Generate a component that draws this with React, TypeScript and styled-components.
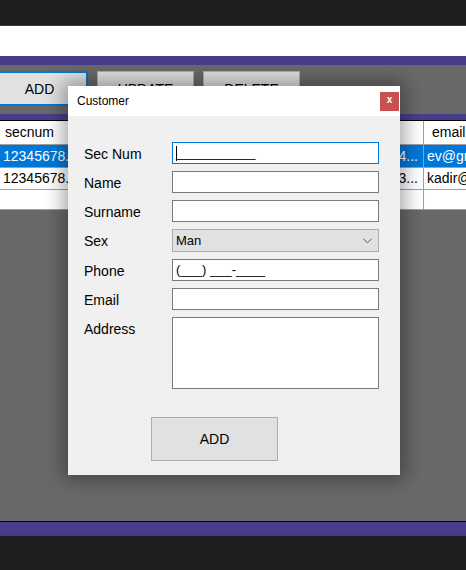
import React from "react";
import styled, { createGlobalStyle } from "styled-components";

const Global = createGlobalStyle`
  html, body { margin: 0; padding: 0; background: #1e1e1e; }
  body { font-family: "Liberation Sans", Arial, sans-serif; }
  * { box-sizing: border-box; }
`;

const Screen = styled.div`
  position: relative;
  width: 466px;
  height: 570px;
  overflow: hidden;
  display: flex;
  flex-direction: column;
  background: #1e1e1e;
`;

const TopBar = styled.div`
  height: 26px;
  flex: none;
  background: #1e1e1e;
  border-bottom: 1px solid #3a3a3a;
`;

const WhiteStrip = styled.div`
  height: 30px;
  flex: none;
  background: #ffffff;
`;

const PurpleStrip = styled.div<{ $h: number; $top?: string; $bottom?: string }>`
  height: ${(p) => p.$h}px;
  flex: none;
  background: #483d8b;
  border-top: ${(p) => p.$top ?? "none"};
  border-bottom: ${(p) => p.$bottom ?? "none"};
`;

const Toolbar = styled.div`
  height: 49px;
  flex: none;
  background: #696969;
  display: flex;
  gap: 9px;
  padding: 6px 0 0 0;
  margin-left: -9px;
`;

const ToolButton = styled.div<{ $active?: boolean }>`
  width: 97px;
  height: 35px;
  background: #e1e1e1;
  border: ${(p) => (p.$active ? "2px solid #0078d7" : "1px solid #adadad")};
  display: flex;
  align-items: center;
  justify-content: center;
  font-size: 14px;
  color: #000;
`;

const Grid = styled.div`
  flex: none;
  background: #fff;
  display: grid;
  grid-template-columns: 83px 100px 100px 58px 83px 100px;
  width: 524px;
`;

const Cell = styled.div<{ $sel?: boolean; $h: number }>`
  height: ${(p) => p.$h}px;
  line-height: ${(p) => p.$h - 1}px;
  padding: 0 3px;
  font-size: 14px;
  color: ${(p) => (p.$sel ? "#fff" : "#000")};
  background: ${(p) => (p.$sel ? "#0078d7" : "#fff")};
  border-right: 1px solid #a0a0a0;
  border-bottom: 1px solid #a0a0a0;
  white-space: nowrap;
  overflow: hidden;
`;

const HeadCell = styled(Cell)<{ $pad: number }>`
  padding: 0 ${(p) => p.$pad}px;
`;

const Filler = styled.div`
  flex: 1;
  background: #696969;
`;

const Dark = styled.div`
  height: 35px;
  flex: none;
  background: #1e1e1e;
  border-top: 1px solid #444;
`;

const Dialog = styled.div`
  position: absolute;
  left: 68px;
  top: 86px;
  width: 332px;
  height: 389px;
  background: #f0f0f0;
  box-shadow: 0 0 18px 5px rgba(0, 0, 0, 0.35);
  display: flex;
  flex-direction: column;
`;

const TitleBar = styled.div`
  height: 30px;
  flex: none;
  background: #fff;
  display: flex;
  align-items: center;
  justify-content: space-between;
  padding: 0 1px 0 9px;
  font-size: 12px;
  color: #000;
`;

const CloseBtn = styled.div`
  width: 19px;
  height: 19px;
  background: #c75050;
  color: #fff;
  font-size: 10px;
  font-weight: bold;
  display: flex;
  align-items: center;
  justify-content: center;
  line-height: 1;
  padding-bottom: 2px;
`;

const Form = styled.div`
  display: grid;
  grid-template-columns: 88px 207px;
  row-gap: 7px;
  padding: 26px 0 0 16px;
  align-items: start;
`;

const Label = styled.div`
  font-size: 14px;
  line-height: 22px;
  height: 22px;
  padding-top: 1px;
  color: #000;
`;

const Input = styled.div<{ $focus?: boolean; $h?: number }>`
  height: ${(p) => p.$h ?? 22}px;
  background: #fff;
  border: 1px solid ${(p) => (p.$focus ? "#0078d7" : "#7a7a7a")};
  font-size: 13px;
  line-height: 20px;
  padding: 0 3px;
  color: #000;
  white-space: pre;
  display: flex;
  align-items: center;
`;

const Caret = styled.span`
  display: inline-block;
  width: 1px;
  height: 15px;
  background: #000;
  margin-right: -1px;
`;

const Select = styled.div`
  height: 23px;
  background: #e1e1e1;
  border: 1px solid #adadad;
  font-size: 13px;
  padding: 0 6px 0 3px;
  display: flex;
  align-items: center;
  justify-content: space-between;
  color: #000;
`;

const Footer = styled.div`
  display: flex;
  padding: 28px 0 0 83px;
`;

const DialogButton = styled.div`
  width: 127px;
  height: 44px;
  background: #e1e1e1;
  border: 1px solid #adadad;
  display: flex;
  align-items: center;
  justify-content: center;
  font-size: 14px;
  color: #000;
`;

const rows = [
  ["12345678...", "Ev", "Sahibi", "Man", "05321234...", "ev@gmail.com"],
  ["12345678...", "Kadir", "Yilmaz", "Man", "05439873...", "kadir@gmail.com"],
];

const headers: [string, number][] = [
  ["secnum", 5],
  ["name", 6],
  ["surname", 6],
  ["sex", 6],
  ["phone", 6],
  ["email", 8],
];

export default function App() {
  return (
    <>
      <Global />
      <Screen>
        <TopBar />
        <WhiteStrip />
        <PurpleStrip $h={9} />
        <Toolbar>
          <ToolButton $active>ADD</ToolButton>
          <ToolButton>UPDATE</ToolButton>
          <ToolButton>DELETE</ToolButton>
        </Toolbar>
        <PurpleStrip $h={7} $bottom="1px solid #000" />
        <Grid>
          {headers.map(([h, pad]) => (
            <HeadCell key={h} $h={24} $pad={pad}>
              {h}
            </HeadCell>
          ))}
          {rows.map((r, i) =>
            r.map((c, j) => (
              <Cell key={`${i}-${j}`} $h={i === 0 ? 23 : 22} $sel={i === 0}>
                {c}
              </Cell>
            ))
          )}
          {headers.map(([h]) => (
            <Cell key={`e-${h}`} $h={20} />
          ))}
        </Grid>
        <Filler />
        <PurpleStrip $h={14} $top="1px solid #000" />
        <Dark />

        <Dialog>
          <TitleBar>
            <span>Customer</span>
            <CloseBtn>x</CloseBtn>
          </TitleBar>
          <Form>
            <Label>Sec Num</Label>
            <Input $focus>
              <Caret />
              {"___________"}
            </Input>
            <Label>Name</Label>
            <Input />
            <Label>Surname</Label>
            <Input />
            <Label>Sex</Label>
            <Select>
              <span>Man</span>
              <svg width="9" height="6" viewBox="0 0 9 6">
                <path d="M0.5 0.8 L4.5 4.8 L8.5 0.8" fill="none" stroke="#555" strokeWidth="1" />
              </svg>
            </Select>
            <Label>Phone</Label>
            <Input>{"(___) ___-____"}</Input>
            <Label>Email</Label>
            <Input />
            <Label>Address</Label>
            <Input $h={72} />
          </Form>
          <Footer>
            <DialogButton>ADD</DialogButton>
          </Footer>
        </Dialog>
      </Screen>
    </>
  );
}
